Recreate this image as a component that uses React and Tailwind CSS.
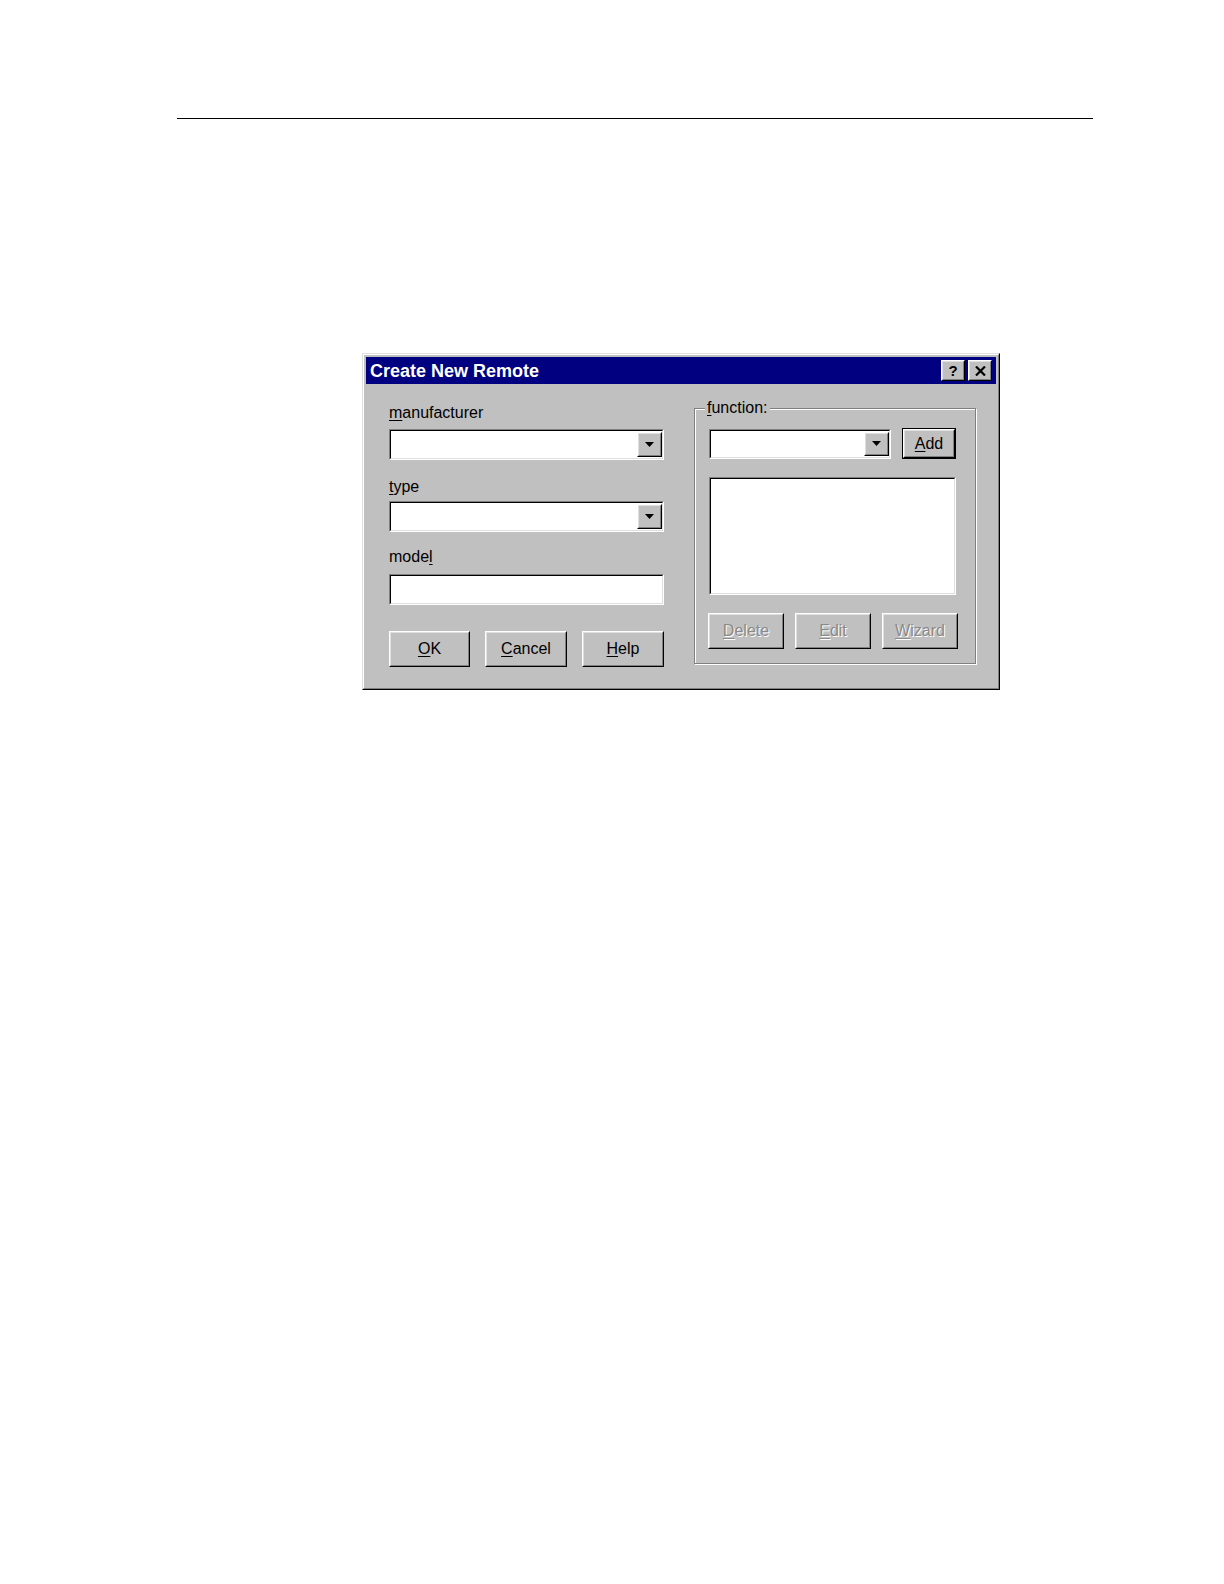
import React from "react";

const GRAY = "bg-[#c0c0c0]";

function Raised({ className = "", children }) {
  return (
    <div
      className={`border-t border-l border-r border-b border-t-white border-l-white border-r-black border-b-black ${GRAY} ${className}`}
    >
      <div className="flex h-full w-full items-center justify-center border-t border-l border-r border-b border-t-[#dfdfdf] border-l-[#dfdfdf] border-r-[#808080] border-b-[#808080]">
        {children}
      </div>
    </div>
  );
}

function Sunken({ className = "", children }) {
  return (
    <div
      className={`border-t border-l border-r border-b border-t-[#808080] border-l-[#808080] border-r-white border-b-white ${className}`}
    >
      <div className="h-full w-full border-t border-l border-r border-b border-t-black border-l-black border-r-[#dfdfdf] border-b-[#dfdfdf] bg-white">
        {children}
      </div>
    </div>
  );
}

function Arrow() {
  return (
    <svg width="9" height="5" viewBox="0 0 9 5">
      <path d="M0 0h9L4.5 5z" fill="#000" />
    </svg>
  );
}

function Combo({ className = "" }) {
  return (
    <Sunken className={className}>
      <div className="flex h-full justify-end py-px">
        <Raised className="h-full w-[25px]">
          <Arrow />
        </Raised>
      </div>
    </Sunken>
  );
}

function Key({ children }) {
  return <span className="underline decoration-1 underline-offset-[2px]">{children}</span>;
}

function Button({ className = "", disabled, children }) {
  return (
    <Raised className={className}>
      <span
        className={
          disabled
            ? "text-[#8a8a8a] [text-shadow:1px_1px_0_#fff]"
            : "text-black"
        }
      >
        {children}
      </span>
    </Raised>
  );
}

export default function App() {
  return (
    <div className="h-screen overflow-hidden bg-white pt-[118px] font-['Liberation_Sans',Arial,sans-serif] text-[16px] leading-[18px] text-black">
      <div className="ml-[177px] h-px w-[916px] bg-black" />

      {/* Dialog */}
      <div className="ml-[362px] mt-[234px] h-[337px] w-[638px] border-t border-l border-r border-b border-t-[#dfdfdf] border-l-[#dfdfdf] border-r-black border-b-black">
        <div className={`h-full w-full border-t border-l border-r border-b border-t-white border-l-white border-r-[#808080] border-b-[#808080] p-[2px] ${GRAY}`}>
          {/* Title bar */}
          <div className="flex h-[27px] items-center justify-between bg-[#000080] pl-[4px] pr-[4px]">
            <span className="text-[18px] font-bold leading-[20px] text-white">Create New Remote</span>
            <div className="flex gap-[3px]">
              <Raised className="h-[21px] w-[24px]">
                <span className="text-[15px] font-bold leading-[15px]">?</span>
              </Raised>
              <Raised className="h-[21px] w-[24px]">
                <svg width="11" height="10" viewBox="0 0 11 10">
                  <path d="M1 0.5l9 9M10 0.5l-9 9" stroke="#000" strokeWidth="2.2" />
                </svg>
              </Raised>
            </div>
          </div>

          {/* Body */}
          <div className="flex items-start pl-[23px]">
            <div className="w-[275px] pt-[20px]">
              <div>
                <Key>m</Key>anufacturer
              </div>
              <Combo className="mt-[7px] h-[31px]" />
              <div className="mt-[18px]">
                <Key>t</Key>ype
              </div>
              <Combo className="mt-[5px] h-[31px]" />
              <div className="mt-[16px]">
                mode<Key>l</Key>
              </div>
              <Sunken className="mt-[8px] h-[31px]" />
              <div className="mt-[26px] flex justify-between">
                <Button className="h-[36px] w-[81px]">
                  <Key>O</Key>K
                </Button>
                <Button className="h-[36px] w-[82px]">
                  <Key>C</Key>ancel
                </Button>
                <Button className="h-[36px] w-[82px]">
                  <Key>H</Key>elp
                </Button>
              </div>
            </div>

            <fieldset className="ml-[30px] mt-[15px] w-[282px] border border-[#808080] pb-[14px] pl-[14px] shadow-[inset_1px_1px_0_#fff,1px_1px_0_#fff]">
              <legend className={`-ml-[4px] px-[2px] ${GRAY}`}>
                <Key>f</Key>unction:
              </legend>
              <div className="mt-[11px] flex h-[31px] items-center">
                <Combo className="h-[30px] w-[182px]" />
                <div className="ml-[11px] h-[31px] w-[54px] border border-black">
                  <Button className="h-full w-full">
                    <Key>A</Key>dd
                  </Button>
                </div>
              </div>
              <Sunken className="mt-[18px] h-[118px] w-[247px]" />
              <div className="-ml-px mt-[18px] flex w-[250px] justify-between">
                <Button disabled className="h-[36px] w-[76px]">
                  <Key>D</Key>elete
                </Button>
                <Button disabled className="h-[36px] w-[76px]">
                  <Key>E</Key>dit
                </Button>
                <Button disabled className="h-[36px] w-[76px]">
                  <Key>W</Key>izard
                </Button>
              </div>
            </fieldset>
          </div>
        </div>
      </div>
    </div>
  );
}
